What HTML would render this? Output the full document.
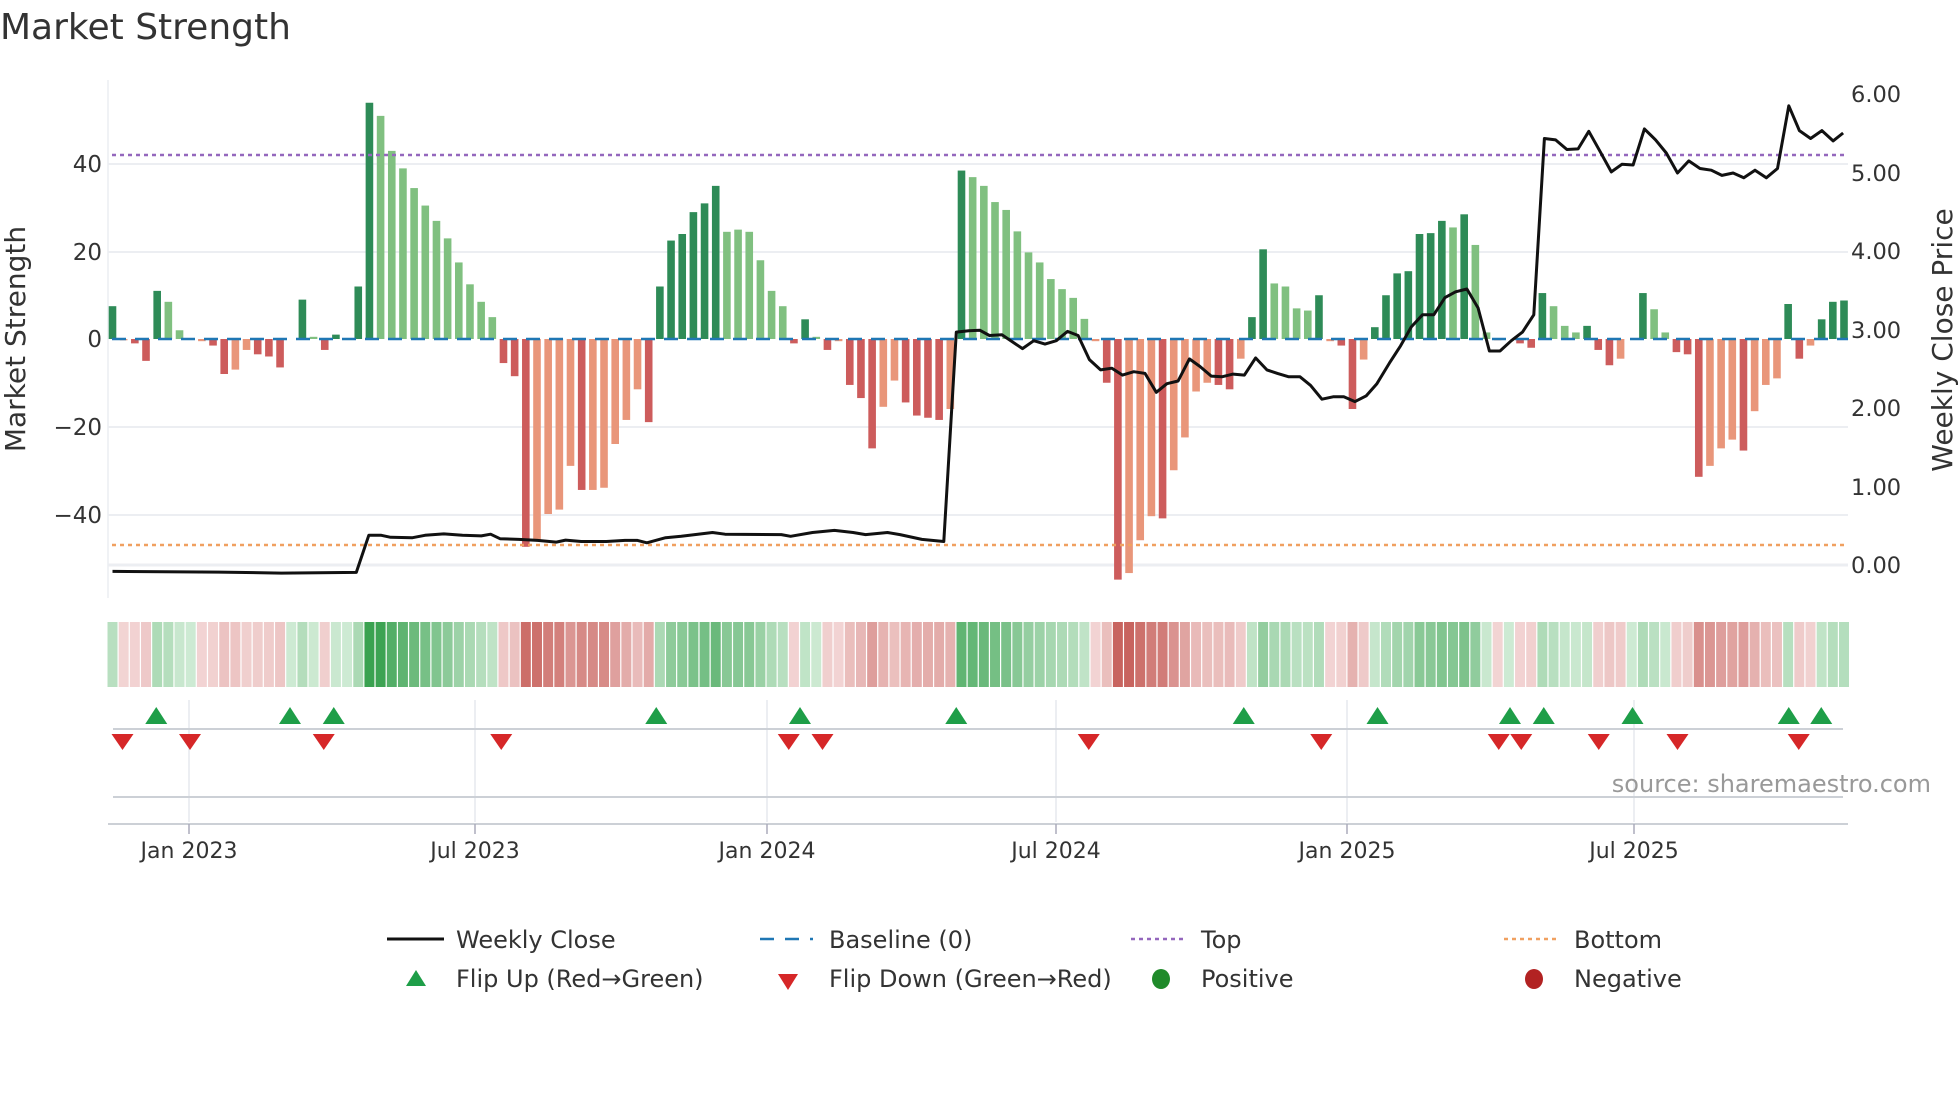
<!DOCTYPE html>
<html><head><meta charset="utf-8"><style>
html,body{margin:0;padding:0;background:#fff;width:1960px;height:1102px;overflow:hidden}
svg{display:block;font-family:"DejaVu Sans","Liberation Sans",sans-serif}
</style></head><body>
<svg id="s" width="1960" height="1102" viewBox="0 0 1960 1102" xmlns="http://www.w3.org/2000/svg">
<text x="0" y="39" font-size="36" fill="#333">Market Strength</text>
<g stroke="#eceef2" stroke-width="2">
<line x1="108" x2="1848" y1="164" y2="164"/><line x1="108" x2="1848" y1="252" y2="252"/>
<line x1="108" x2="1848" y1="427" y2="427"/><line x1="108" x2="1848" y1="515" y2="515"/>
<line x1="108" x2="1848" y1="565" y2="565" stroke-width="3"/>
</g>
<line x1="108" x2="108" y1="80" y2="598" stroke="#eceef2" stroke-width="1.5"/>
<g font-size="23" fill="#333" text-anchor="end">
<text x="102" y="172">40</text><text x="102" y="260">20</text><text x="102" y="347">0</text>
<text x="102" y="435">−20</text><text x="102" y="523">−40</text>
</g>
<g font-size="22.5" fill="#333">
<text x="1851" y="102">6.00</text><text x="1851" y="181">5.00</text><text x="1851" y="259">4.00</text>
<text x="1851" y="338">3.00</text><text x="1851" y="416">2.00</text><text x="1851" y="495">1.00</text><text x="1851" y="573">0.00</text>
</g>
<text transform="translate(25,339) rotate(-90)" font-size="28" fill="#333" text-anchor="middle">Market Strength</text>
<text transform="translate(1952,340) rotate(-90)" font-size="28" fill="#333" text-anchor="middle">Weekly Close Price</text>
<g id="bars"></g>
<line x1="112" x2="1848" y1="339" y2="339" stroke="#1f77b4" stroke-width="2.5" stroke-dasharray="14,9"/>
<line x1="112" x2="1848" y1="155" y2="155" stroke="#9467bd" stroke-width="2.5" stroke-dasharray="4,4"/>
<line x1="112" x2="1848" y1="545" y2="545" stroke="#f0a060" stroke-width="2.5" stroke-dasharray="4,4"/>
<polyline id="price" fill="none" stroke="#111" stroke-width="3" stroke-linejoin="round"/>
<g id="strip"></g>
<g stroke="#e6e9ee" stroke-width="1.5">
<line x1="189" x2="189" y1="700" y2="822"/><line x1="475" x2="475" y1="700" y2="822"/>
<line x1="767" x2="767" y1="700" y2="822"/><line x1="1056" x2="1056" y1="700" y2="822"/>
<line x1="1347" x2="1347" y1="700" y2="822"/><line x1="1634" x2="1634" y1="700" y2="822"/>
</g>
<line x1="113" x2="1843" y1="729" y2="729" stroke="#ccd0d6" stroke-width="2"/>
<line x1="113" x2="1843" y1="797" y2="797" stroke="#ccd0d6" stroke-width="2"/>
<line x1="108" x2="1848" y1="824" y2="824" stroke="#ccd0d6" stroke-width="2"/>
<g stroke="#aab" stroke-width="1.5">
<line x1="189" x2="189" y1="824" y2="834"/><line x1="475" x2="475" y1="824" y2="834"/>
<line x1="767" x2="767" y1="824" y2="834"/><line x1="1056" x2="1056" y1="824" y2="834"/>
<line x1="1347" x2="1347" y1="824" y2="834"/><line x1="1634" x2="1634" y1="824" y2="834"/>
</g>
<g id="marks"></g>
<text x="1931" y="792" font-size="24" fill="#999" text-anchor="end">source: sharemaestro.com</text>
<g font-size="22" fill="#333" text-anchor="middle">
<text x="189" y="858">Jan 2023</text><text x="475" y="858">Jul 2023</text><text x="767" y="858">Jan 2024</text>
<text x="1056" y="858">Jul 2024</text><text x="1347" y="858">Jan 2025</text><text x="1634" y="858">Jul 2025</text>
</g>
<g font-size="24" fill="#333">
<line x1="387" x2="444" y1="939" y2="939" stroke="#111" stroke-width="3"/>
<text x="456" y="948">Weekly Close</text>
<line x1="760" x2="813" y1="939" y2="939" stroke="#1f77b4" stroke-width="2.5" stroke-dasharray="14,11"/>
<text x="829" y="948">Baseline (0)</text>
<line x1="1131" x2="1185" y1="939" y2="939" stroke="#9467bd" stroke-width="2.5" stroke-dasharray="4,4"/>
<text x="1201" y="948">Top</text>
<line x1="1504" x2="1559" y1="939" y2="939" stroke="#f0a060" stroke-width="2.5" stroke-dasharray="4,4"/>
<text x="1574" y="948">Bottom</text>
<polygon points="416,970 406,986 426,986" fill="#1e9e48"/>
<text x="456" y="987">Flip Up (Red→Green)</text>
<polygon points="778,974 798,974 788,990" fill="#d62728"/>
<text x="829" y="987">Flip Down (Green→Red)</text>
<ellipse cx="1161" cy="979" rx="9" ry="10" fill="#1f8a2a"/>
<text x="1201" y="987">Positive</text>
<ellipse cx="1534" cy="979" rx="9" ry="10" fill="#b22222"/>
<text x="1574" y="987">Negative</text>
</g>
</svg>
<script>
var NS="http://www.w3.org/2000/svg";
function el(t,a,p){var e=document.createElementNS(NS,t);for(var k in a)e.setAttribute(k,a[k]);p.appendChild(e);return e;}
var d=[[7.5,'D'],[-0.3,'S'],[-1,'R'],[-5,'R'],[11,'D'],[8.5,'L'],[2,'L'],[0,'L'],[-0.5,'S'],[-1.5,'R'],
[-8,'R'],[-7,'S'],[-2.5,'S'],[-3.5,'R'],[-4,'R'],[-6.5,'R'],[0,'L'],[9,'D'],[0.5,'L'],[-2.5,'R'],
[1,'D'],[0,'L'],[12,'D'],[54,'D'],[51,'L'],[43,'L'],[39,'L'],[34.5,'L'],[30.5,'L'],[27,'L'],
[23,'L'],[17.5,'L'],[12.5,'L'],[8.5,'L'],[5,'L'],[-5.5,'R'],[-8.5,'R'],[-47.5,'R'],[-46,'S'],[-40,'S'],
[-39,'S'],[-29,'S'],[-34.5,'R'],[-34.5,'S'],[-34,'S'],[-24,'S'],[-18.5,'S'],[-11.5,'S'],[-19,'R'],[12,'D'],
[22.5,'D'],[24,'D'],[29,'D'],[31,'D'],[35,'D'],[24.5,'L'],[25,'L'],[24.5,'L'],[18,'L'],[11,'L'],
[7.5,'L'],[-1,'R'],[4.5,'D'],[0.5,'L'],[-2.5,'R'],[-0.5,'S'],[-10.5,'R'],[-13.5,'R'],[-25,'R'],[-15.5,'S'],
[-9.5,'S'],[-14.5,'R'],[-17.5,'R'],[-18,'R'],[-18.5,'R'],[-16,'S'],[38.5,'D'],[37,'L'],[35,'L'],[31.3,'L'],
[29.5,'L'],[24.6,'L'],[19.8,'L'],[17.5,'L'],[13.7,'L'],[11.4,'L'],[9.4,'L'],[4.6,'L'],[-0.5,'S'],[-10,'R'],
[-55,'R'],[-53.5,'S'],[-46,'S'],[-40.5,'S'],[-41,'R'],[-30,'S'],[-22.5,'S'],[-12,'S'],[-10,'S'],[-10.5,'R'],
[-11.5,'R'],[-4.5,'S'],[5,'D'],[20.5,'D'],[12.7,'L'],[12,'L'],[7,'L'],[6.5,'L'],[10,'D'],[-0.5,'S'],
[-1.5,'R'],[-16,'R'],[-4.7,'S'],[2.7,'D'],[10,'D'],[15,'D'],[15.5,'D'],[24,'D'],[24.2,'D'],[27,'D'],
[25.5,'L'],[28.5,'D'],[21.5,'L'],[1.5,'L'],[-0.3,'S'],[0,'L'],[-1,'R'],[-2,'R'],[10.5,'D'],[7.5,'L'],
[3,'L'],[1.5,'L'],[3,'D'],[-2.5,'R'],[-6,'R'],[-4.5,'S'],[0,'L'],[10.5,'D'],[6.8,'L'],[1.5,'L'],
[-3,'R'],[-3.5,'R'],[-31.5,'R'],[-29,'S'],[-25,'S'],[-23,'S'],[-25.5,'R'],[-16.5,'S'],[-10.5,'S'],[-9,'S'],
[8,'D'],[-4.5,'R'],[-1.5,'S'],[4.5,'D'],[8.5,'D'],[8.8,'D']];
var col={D:'#2e8b57',L:'#80c080',R:'#cd5c5c',S:'#e9967a'};
var bars=document.getElementById('bars'),strip=document.getElementById('strip');
var n=d.length,x0=112.5,dx=(1844-112.5)/(n-1);
function mix(a,b,t){return 'rgb('+[0,1,2].map(function(i){return Math.round(a[i]+(b[i]-a[i])*t)}).join(',')+')';}
for(var i=0;i<n;i++){
 var v=d[i][0],x=x0+dx*i,y=339-v*4.375;
 if(Math.abs(v)>0.05) el('rect',{x:x-3.8,y:Math.min(y,339),width:7.6,height:Math.abs(v*4.375),fill:col[d[i][1]]},bars);
 var t=Math.min(1,Math.abs(v)/52);t=0.08+0.92*t;
 var c=v>=0?mix([218,240,222],[58,162,80],t):mix([246,222,222],[200,100,95],t);
 el('rect',{x:x-dx/2+0.6,y:622,width:dx-1.2,height:65,fill:c},strip);
}
var p1=[[180,1485],[350,1487],[450,1490],[570,1488],[590,1380],[610,1380],[625,1386],[660,1387],[680,1380],[710,1376],[740,1380],[770,1382],[785,1377],[800,1390],[830,1392],[860,1395],[890,1400],[905,1394],[930,1398],[970,1398],[1000,1395],[1020,1395],[1035,1402],[1065,1387],[1090,1383],[1140,1372],[1160,1377],[1250,1378],[1265,1383],[1300,1372],[1335,1366],[1365,1372],[1385,1378],[1420,1372],[1440,1378],[1475,1392],[1510,1398],[1530,790],[1550,786],[1568,785]];
var p2=[[15,800],[35,798],[68,838],[86,815],[104,825],[122,815],[140,788],[157,800],[175,870],[193,900],[211,895],[228,915],[246,905],[264,910],[282,965],[299,940],[317,932],[335,868],[352,890],[370,918],[387,920],[405,912],[423,915],[441,865],[459,900],[476,910],[494,920],[512,920],[529,945],[547,985],[565,978],[582,978],[600,992],[618,975],[635,940],[655,880],[673,830],[690,775],[708,740],[726,740],[744,690],[761,673],[779,665],[797,720],[815,845],[832,845],[850,815],[868,790],[886,740],[903,228],[921,232],[939,260],[957,258],[974,207],[992,265],[1010,325],[1027,303],[1045,305],[1063,200],[1081,232],[1098,270],[1116,328],[1134,293],[1152,315],[1170,320],[1187,335],[1205,328],[1222,342],[1240,320],[1258,342],[1276,315],[1294,133],[1311,205],[1329,228],[1347,205],[1365,235],[1381,212]];
var k=540/1568,pts=[];
p1.forEach(function(p){pts.push((p[0]/1.6).toFixed(1)+','+(60+p[1]*k).toFixed(1));});
p2.forEach(function(p){pts.push((980+p[0]/1.6).toFixed(1)+','+(60+p[1]*k).toFixed(1));});
document.getElementById('price').setAttribute('points',pts.join(' '));
var m=document.getElementById('marks');
[125,232,267,525,640,765,995,1102,1208,1235,1306,1431,1457].forEach(function(x){x*=1.25;el('polygon',{points:(x)+',707 '+(x-11)+',724 '+(x+11)+',724',fill:'#1e9e48'},m);});
[98,152,259,401,631,658,871,1057,1199,1217,1279,1342,1439].forEach(function(x){x*=1.25;el('polygon',{points:(x-11)+',734 '+(x+11)+',734 '+x+',750',fill:'#d62728'},m);});
</script>
</body></html>
